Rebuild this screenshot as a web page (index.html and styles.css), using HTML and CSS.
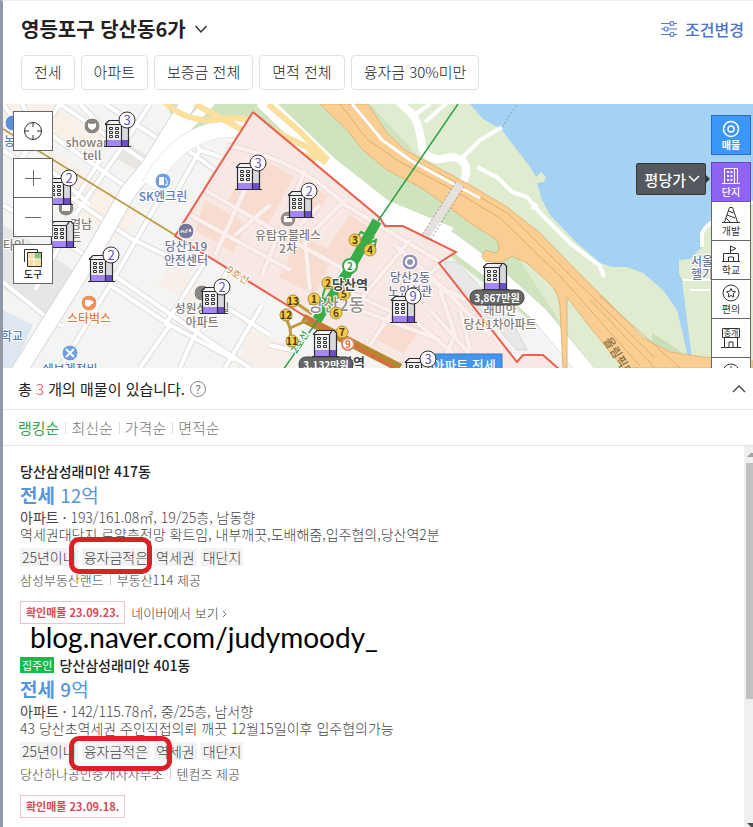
FILE: index.html
```html
<!DOCTYPE html>
<html lang="ko">
<head>
  <meta charset="UTF-8">
  <meta name="viewport" content="width=device-width, initial-scale=1.0">
  <link rel="stylesheet" href="styles.css">
  <title>영등포구 당산동6가 매물</title>
</head>
<body>

  <header class="header">
    <div class="header-top">
      <h1><button class="region">영등포구 당산동6가
        <svg width="14" height="10" viewBox="0 0 14 10"><path d="M1.500 2l5.500 6 5.500-6" fill="none" stroke="#333" stroke-width="1.500"/></svg>
      </button></h1>
      <button class="change">
        <svg width="16" height="16" viewBox="0 0 16 16" fill="none" stroke="#5379cf" stroke-width="1.200">
          <path d="M0 2.500h9M13 2.500h3M0 8h3M7 8h9M0 13.500h9M13 13.500h3"/>
          <circle cx="11" cy="2.500" r="2"/><circle cx="5" cy="8" r="2"/><circle cx="11" cy="13.500" r="2"/>
        </svg>
        조건변경
      </button>
    </div>
    <div class="filters">
      <button>전세</button>
      <button>아파트</button>
      <button>보증금 전체</button>
      <button>면적 전체</button>
      <button>융자금 30%미만</button>
    </div>
  </header>

  <section class="map">
    <svg class="map-canvas" viewBox="3 104 750 264" preserveAspectRatio="xMidYMid slice">
      <defs>
        <path id="streets" d="M3 150L60 190L130 238L180 262M3 205L70 245L150 300L215 345L250 368M3 282L50 320L62 326M22 104L48 150M60 104L20 160M60 104L150 165M105 104L160 140M30 120L130 190M150 104L120 150L75 215M45 165L90 205M165 190L110 285L60 368M110 285L170 325L235 360M170 325L140 368M205 262L165 325M228 270L190 345L180 368M215 300L270 335M262 305L225 368M270 345L300 352M3 104L22 130M60 245L35 290M80 104L100 125M160 130L215 170M180 122L200 150L175 195M200 150L245 165M75 200L100 160"/>
        <path id="lanes" d="M226 145Q300 160 345 205L440 262M205 190L300 245L345 270M190 215L290 270M240 135L205 190M262 152L215 255M305 170L262 275M345 200L305 240L310 290M375 222L340 275M410 240L360 300L330 310M440 265L400 300L370 345M395 245L440 285L490 335M345 290L420 325L470 368M360 310L440 340M440 290L455 335L440 368M440 290Q470 290 500 345M300 225L320 205M420 270Q450 300 480 300M460 310L470 350M235 235L270 205M430 310L480 365"/>
        <path id="expressway" d="M320 104L347 130L363 150L387 170L420 187L450 208L470 223L497 240Q502 252 494 253L486 250Q478 256 486 261L500 263L512 256L527 263L548 282Q559 292 560 307L563 368H567L567 297L590 327L623 368H753V361L703 357L670 352L643 338L613 307L573 267L540 233L507 207L470 185L433 165L405 150L387 133L370 107L367 104Z"/>
        <g id="tower">
          <path d="M2 28V7L6 2H22L25 6V28Z" fill="#f1f1f1"/>
          <path d="M17 5l5-3 3 4v16h-8z" fill="#d9d9dc"/>
          <path d="M2 22H17V28H2Z" fill="#a487f2"/>
          <path d="M17 22h8v6h-8z" fill="#6f50c8"/>
          <path d="M2.500 28V6.500M17.500 28V7M24.500 28V5M1 6.500H17.500M1 6.500L5 2.500H22L25 5.500M17.500 6.500L20 3M0 28.500H27" fill="none" stroke="#2d2b33" stroke-width="1.200"/>
          <path d="M5.500 9.500h3v2h-3zM11.500 9.500h3v2h-3zM5.500 13.500h3v2h-3zM11.500 13.500h3v2h-3zM5.500 17.500h3v2h-3zM11.500 17.500h3v2h-3z" fill="#fff" stroke="#333"/>
        </g>
      </defs>

      <!-- 바탕 -->
      <rect x="3" y="104" width="750" height="264" fill="#f4f4f3"/>
      <path d="M3 104h50l-30 40 -20-12zM60 110l45 28 -12 22 -50-30zM50 150l90 60 -20 30 -80-50z" fill="#f9f0e8"/>
      <path d="M3 225L45 250L75 272L45 318L3 288Z" fill="#e6e6e8"/>
      <path d="M3 310l30 15 -20 43h-10z" fill="#dde6f1"/>
      <path d="M170 262l50 30 -12 22 -50-30zM250 330l50 20 -10 18h-55z" fill="#f7efe9"/>
      <path d="M130 145l20 12 -8 16 -25-14z" fill="#e9e6e1"/>

      <!-- 녹지와 한강 -->
      <path d="M165 104H500V200L640 368H590L430 240L330 170L235 125L190 140L158 160L178 125Z" fill="#cfe3bf"/>
      <path d="M370 104H753V368H590L500 230L440 180Z" fill="#dfecd0"/>
      <path d="M470 104L483 119L502 130L517 150L530 167L536 177L541 172L546 177L544 182L537 183L542 200L550 215L577 243L600 263L612 267L627 267L643 273L663 290L677 310L682 330L688 358H692L687 320L682 280L679 273V260L690 259L702 247V232L712 223L753 205V104Z" fill="#a5d2f2"/>
      <path d="M702 247V234Q704 226 716 220L753 202" fill="none" stroke="#fff" stroke-width="4"/>
      <path d="M690 290h20M683 280h30" stroke="#fff" stroke-width="2"/>
      <path d="M652 333q20 12 30 20q-16 2-30-12z" fill="#c9dfb8"/>

      <!-- 도로 -->
      <use href="#streets" class="street-edge"/>
      <use href="#streets" class="street"/>
      <path d="M190 100L150 165L128 192L95 250L16 376" class="road-edge"/>
      <path d="M190 100L150 165L128 192L95 250L16 376" class="road"/>
      <path d="M212 100L165 150L140 178" class="road narrow"/>
      <path d="M150 185Q185 122 245 130L330 170L385 215L450 240L490 270L540 315L590 376" class="shore-edge"/>
      <path d="M150 185Q185 122 245 130L330 170L385 215L450 240L490 270L540 315L590 376" class="shore"/>
      <path d="M262 100L330 165L385 208L450 235" class="shore"/>
      <path d="M165 102Q185 122 215 120Q240 114 262 125L305 146L326 163M268 104L298 130L328 160M195 104L250 134L316 160" class="ramp"/>
      <path d="M397 100L413 115Q420 125 422 148Q430 164 450 157Q468 158 466 174L461 188" class="path wide"/>
      <path d="M430 104L410 118M450 100L425 122" class="path"/>
      <path d="M502 127L480 140L463 157M477 167L498 178L512 192L527 197L540 213L570 243L600 266L604 277M537 204L532 209" class="path"/>
      <path d="M502 127L517 104" fill="none" stroke="#8f9aa5" stroke-dasharray="2 2"/>
      <use href="#expressway" class="expressway"/>
      <path d="M340 104L368 140L400 162L450 188L500 218L560 276L640 366M350 104L378 137L405 156L455 182L510 215L570 275L655 358" class="expressway-lines"/>
      <path d="M352 104L382 140L410 160L450 182L480 198" fill="none" stroke="#fff" stroke-width="3"/>
      <path d="M600 296L680 368M590 300L655 368" class="expressway-lines"/>
      <path d="M460 184L426 236L418 252" class="bridge"/>
      <path d="M456 182L415 246M464 187L424 250" fill="none" stroke="#9b9b9b" stroke-dasharray="2 2"/>
      <path d="M445 262l12 0 54 58 16 30h-10l-72-80z" fill="#e9e8e7" stroke="#d5d5d5"/>

      <!-- 당산동6가 경계 -->
      <path d="M253 112L175 236L303 315L397 370H560L543 355H523L517 362L439 263L456 252L403 226H385L380 218Z" fill="#f8e8e3"/>
      <path d="M256 155l38 22 -26 48 -42-22zM205 200l42 24 -14 28 -38-22zM300 235l35 18 -20 42 -36-18zM350 215l25 16 -26 40 -28-14zM395 310l28 16 -20 28 -28-16zM300 178l28 18 -12 20 -26-16z" fill="#f8dcd0"/>
      <use href="#lanes" class="lane-edge"/>
      <use href="#lanes" class="lane"/>
      <path d="M253 112L175 236L303 315L397 370M560 370L543 355H523L517 362L439 263L456 252L403 226H385L380 218L253 112" fill="none" stroke="#e9604d" stroke-width="2"/>

      <!-- 지하철 -->
      <path d="M3 129L175 235" fill="none" stroke="#b89a45" stroke-width="1.500"/>
      <path d="M303 318L400 368" fill="none" stroke="#b8862c" stroke-width="9"/>
      <path d="M303 315L397 370" fill="none" stroke="#e9604d" stroke-width="2"/>
      <path d="M292 300L312 314M285 315L290 328L308 320M291 340L290 328" fill="none" stroke="#c09a46" stroke-width="3"/>
      <path d="M458 104L378 221M318 320L283 370" fill="none" stroke="#32a04a" stroke-width="1.500"/>
      <path d="M377 221L349 270L317 320" fill="none" stroke="#3aac47" stroke-width="10"/>
      <path d="M355 240L361 232L374 238M362 246L376 240L374 250M326 285L322 298L332 302L345 292" fill="none" stroke="#3aac47" stroke-width="2"/>
      <text x="236" y="278" class="line9" transform="rotate(32 236 278)">9호선</text>
      <text x="303" y="344" class="line2" transform="rotate(-58 303 344)">2호선</text>
      <text x="336" y="311" class="dong">당산2동</text>
      <g class="exit">
        <circle cx="355" cy="240" r="6"/><text x="355" y="244">3</text>
        <circle cx="370" cy="250" r="6"/><text x="370" y="254">4</text>
        <circle cx="328" cy="283" r="6"/><text x="328" y="287">2</text>
        <circle cx="344" cy="294" r="6"/><text x="344" y="298">5</text>
        <circle cx="314" cy="299" r="6"/><text x="314" y="303">1</text>
        <circle cx="336" cy="313" r="6"/><text x="336" y="317">6</text>
        <circle cx="293" cy="301" r="6"/><text x="293" y="305">13</text>
        <circle cx="286" cy="315" r="6"/><text x="286" y="319">12</text>
        <circle cx="292" cy="341" r="6"/><text x="292" y="345">11</text>
        <circle cx="342" cy="332" r="6"/><text x="342" y="336">7</text>
      </g>
      <circle cx="350" cy="266" r="7" fill="#fff" stroke="#3aac47" stroke-width="2"/>
      <text x="350" y="270" class="station-no green">2</text>
      <circle cx="348" cy="344" r="6" fill="#fff" stroke="#e08a66" stroke-width="2"/>
      <text x="348" y="348" class="station-no orange">9</text>

      <!-- 지명 -->
      <g class="spot">
        <circle cx="92" cy="126" r="8" fill="#8a8580"/><path d="M88 123q4 2 8 0v4q-4 6-8 0z" fill="#fff"/>
        <circle cx="163" cy="181" r="8" fill="#6f9fe0"/><path d="M159 177h5v8h-5z" fill="#fff"/><path d="M165 178l2 2v5h-2" fill="none" stroke="#fff"/>
        <circle cx="186" cy="231" r="8" fill="#78789a"/><path d="M181 233v-2h3v2M186 233v-3h2M189 232l1-3 1 3" fill="none" stroke="#fff"/>
        <circle cx="66" cy="208" r="8" fill="#8a8580"/><path d="M62 205h8v6h-8z" fill="#fff"/>
        <circle cx="89" cy="303" r="8" fill="#ee935c"/><path d="M85 300h6v5q-3 3-6 0zM91 301h2v3h-2" fill="#fff"/>
        <circle cx="70" cy="353" r="8" fill="#6f9fe0"/><path d="M66 349l8 8M74 349l-8 8" stroke="#fff" stroke-width="2"/>
        <circle cx="288" cy="219" r="8" fill="#9d8e88"/><path d="M284 216h8v6h-8z" fill="#fff"/>
        <circle cx="410" cy="262" r="8" fill="#9092b8"/><circle cx="410" cy="262" r="4" fill="none" stroke="#fff" stroke-width="2"/>
        <circle cx="202" cy="293" r="8" fill="#8a8580"/>
        <circle cx="13" cy="123" r="8" fill="#5b8fd8"/>
      </g>
      <g class="place">
        <text x="92" y="147">showand</text><text x="92" y="160">tell</text>
        <text x="163" y="201" class="blue">SK엔크린</text>
        <text x="186" y="251" class="slate">당산119</text><text x="186" y="265" class="slate">안전센터</text>
        <text x="81" y="229">경남</text><text x="76" y="242">트</text>
        <text x="14" y="250">타임</text>
        <text x="15" y="146" class="blue">농협</text>
        <text x="89" y="323" class="orange">스타벅스</text>
        <text x="12" y="341" class="blue">학교</text>
        <text x="70" y="374" class="blue">쉐보레정비</text>
        <text x="202" y="313">성원상떼빌</text><text x="202" y="327">아파트</text>
        <text x="288" y="240">유탑유블레스</text><text x="288" y="253">2차</text>
        <text x="410" y="282" class="slate">당산2동</text><text x="410" y="296" class="slate">노인회관</text>
        <text x="500" y="315">래미안</text><text x="500" y="329">당산1차아파트</text>
        <text x="702" y="266" class="slate">서울</text><text x="702" y="279" class="slate">헬기</text>
        <text x="350" y="289" class="station">당산역</text>
        <text x="347" y="367" class="station">당산역</text>
        <text x="618" y="364" class="road-name" transform="rotate(58 618 364)">올림픽대로</text>
      </g>

      <!-- 단지 마커 -->
      <g class="marker">
        <use href="#tower" x="104" y="118"/><circle cx="127" cy="120" r="8"/><text x="127" y="125">3</text>
        <use href="#tower" x="46" y="176"/><circle cx="69" cy="178" r="8"/><text x="69" y="183">2</text>
        <use href="#tower" x="49" y="219"/>
        <use href="#tower" x="88" y="253"/><circle cx="111" cy="255" r="8"/><text x="111" y="260">2</text>
        <use href="#tower" x="200" y="285"/><circle cx="222" cy="287" r="8"/><text x="222" y="292">2</text>
        <use href="#tower" x="235" y="161"/><circle cx="258" cy="163" r="8"/><text x="258" y="168">3</text>
        <use href="#tower" x="287" y="189"/><circle cx="309" cy="191" r="8"/><text x="309" y="196">2</text>
        <use href="#tower" x="390" y="294"/><circle cx="413" cy="296" r="8"/><text x="413" y="301">9</text>
        <use href="#tower" x="312" y="328"/>
        <use href="#tower" x="482" y="261"/>
        <rect x="432" y="354" width="70" height="20" fill="#4296ef" stroke="#3576c2"/>
        <text x="464" y="370" class="deal">아파트 전세</text>
        <use href="#tower" x="404" y="356"/><circle cx="428" cy="359" r="8"/><text x="428" y="364">3</text>
      </g>
      <g class="price-tag">
        <rect x="470" y="290" width="54" height="15" rx="7"/><text x="497" y="302">3,867만원</text>
        <rect x="299" y="357" width="54" height="15" rx="7"/><text x="326" y="369">3,132만원</text>
      </g>
    </svg>

    <div class="tools">
      <button class="tool" aria-label="현재 위치">
        <svg width="20" height="20" viewBox="0 0 20 20" fill="none" stroke="#333"><circle cx="10" cy="10" r="8.500"/><path d="M10 1v5M10 14v5M1 10h5M14 10h5"/></svg>
      </button>
      <div class="zoom">
        <button class="tool" aria-label="확대"><svg width="18" height="18" viewBox="0 0 18 18" stroke="#666"><path d="M9.500 1v16M1 9.500h16"/></svg></button>
        <button class="tool" aria-label="축소"><svg width="18" height="18" viewBox="0 0 18 18" stroke="#666"><path d="M1 9.500h16"/></svg></button>
      </div>
      <button class="tool">
        <svg width="20" height="20" viewBox="0 0 20 20"><path d="M1.500 14V1.500h13V4" fill="none" stroke="#333"/><path d="M4 4h15v15H4z" fill="#f5dfa9"/><path d="M11 4h8v7h-8z" fill="#8fc27c"/><path d="M4 11h15M11 4v15" stroke="#fff"/><path d="M4.500 4.500h14v14h-14z" fill="none" stroke="#333"/></svg>
        도구
      </button>
    </div>

    <button class="unit">평당가
      <svg width="12" height="8" viewBox="0 0 12 8"><path d="M1 1l5 5 5-5" fill="none" stroke="#fff" stroke-width="1.500"/></svg>
    </button>

    <div class="layers">
      <button class="layer sale">
        <svg width="18" height="18" viewBox="0 0 18 18" fill="none" stroke="#fff" stroke-width="1.500"><circle cx="9" cy="9" r="7.500"/><circle cx="9" cy="9" r="3"/></svg>
        매물
      </button>
      <button class="layer complex">
        <svg width="18" height="18" viewBox="0 0 18 18" fill="none" stroke="#fff"><path d="M0 16.500h18M2.500 16V1.500h10V16M12.500 1.500h3V16"/><path d="M5 4h2v2H5zM8.500 4h2v2h-2zM5 8h2v2H5zM8.500 8h2v2h-2zM5 12h2v2H5zM8.500 12h2v2h-2z" stroke="none" fill="#fff"/></svg>
        단지
      </button>
      <button class="layer">
        <svg width="18" height="18" viewBox="0 0 18 18" fill="none" stroke="#333"><path d="M0 16.500h18M2.500 16L7.500 1.500h3L15.500 16M6.500 5l5 2M5 9l8 3M8 16L4 12"/></svg>
        개발
      </button>
      <button class="layer">
        <svg width="18" height="18" viewBox="0 0 18 18" fill="none" stroke="#333"><path d="M0 16.500h18M1.500 16V8.500h15V16M6.500 16v-4h5v4M8.500 8V1L14 3.500 8.500 6"/></svg>
        학교
      </button>
      <button class="layer">
        <svg width="18" height="18" viewBox="0 0 18 18" fill="none" stroke="#333"><circle cx="9" cy="9" r="8"/><path d="M9 4.500l1.400 2.800 3 .4-2.200 2.200.5 3.100L9 11.500 6.300 13l.5-3.100L4.600 7.700l3-.4z"/></svg>
        편의
      </button>
      <button class="layer agent" aria-label="중개">
        <svg width="20" height="22" viewBox="0 0 20 22" fill="none" stroke="#333"><path d="M1.500 1.500h17v9h-17zM3.500 10.500v10M16.500 10.500v10M0 20.500h20M8 20v-5h4v5"/><text x="10" y="9" class="agent-text">중개</text></svg>
      </button>
      <button class="layer more" aria-label="더보기">
        <svg width="18" height="18" viewBox="0 0 18 18" fill="none" stroke="#333"><circle cx="9" cy="9" r="8"/><path d="M9 3v6l4 2"/></svg>
      </button>
    </div>
  </section>

  <section class="summary">
    <p>총 <em>3</em> 개의 매물이 있습니다.</p>
    <button class="help" aria-label="도움말">?</button>
    <button class="fold" aria-label="접기">
      <svg width="14" height="8" viewBox="0 0 14 8"><path d="M1 7l6-6 6 6" fill="none" stroke="#444" stroke-width="1.300"/></svg>
    </button>
  </section>

  <nav class="sort">
    <a href="#" class="active">랭킹순</a>
    <a href="#">최신순</a>
    <a href="#">가격순</a>
    <a href="#">면적순</a>
  </nav>

  <main class="results">
    <div class="list">
      <article class="item">
        <h2>당산삼성래미안 417동</h2>
        <p class="price">전세 <span>12억</span></p>
        <p class="spec"><b>아파트 ·</b> 193/161.08㎡, 19/25층, 남동향</p>
        <p class="desc">역세권대단지 로얄층전망 확트임, 내부깨끗,도배해줌,입주협의,당산역2분</p>
        <div class="tags marked">
          <span>25년이내</span><span>융자금적은</span><span>역세권</span><span>대단지</span>
        </div>
        <p class="agency"><span>삼성부동산랜드</span><span>부동산114 제공</span></p>
        <div class="confirm">
          <span class="date">확인매물 23.09.23.</span>
          <a href="#">네이버에서 보기 <svg width="5" height="8" viewBox="0 0 5 8"><path d="M1 1l3 3-3 3" fill="none" stroke="#777"/></svg></a>
        </div>
      </article>

      <article class="item">
        <h2><span class="owner">집주인</span>당산삼성래미안 401동</h2>
        <p class="price">전세 <span class="strong">9</span><span>억</span></p>
        <p class="spec"><b>아파트 ·</b> 142/115.78㎡, 중/25층, 남서향</p>
        <p class="desc">43 당산초역세권 주인직접의뢰 깨끗 12월15일이후 입주협의가능</p>
        <div class="tags marked long">
          <span>25년이내</span><span>융자금적은</span><span>역세권</span><span>대단지</span>
        </div>
        <p class="agency"><span>당산하나공인중개사사무소</span><span>텐컴즈 제공</span></p>
        <div class="confirm">
          <span class="date">확인매물 23.09.18.</span>
        </div>
      </article>

      <p class="signature">blog.naver.com/judymoody_</p>
    </div>

    <div class="scrollbar">
      <svg width="6" height="4" viewBox="0 0 6 4"><path d="M0 4L6 -2V4z" fill="#a3a3a3"/></svg>
      <div class="thumb"></div>
      <svg width="6" height="4" viewBox="0 0 6 4"><path d="M0 0L6 6V0z" fill="#505050"/></svg>
    </div>
  </main>

</body>
</html>
```
FILE: styles.css
```css
*, *::before, *::after {
  box-sizing: border-box;
}

body {
  margin: 0;
  height: 100vh;
  display: flex;
  flex-direction: column;
  overflow: hidden;
  background-color: #fff;
  border-top: 1px solid #eee;
  border-left: 3px solid #8f99a8;
  font-family: 'Noto Sans CJK KR', sans-serif;
  color: #222;
}

h1, h2, p {
  margin: 0;
}

button {
  margin: 0;
  padding: 0;
  border: none;
  background: none;
  color: inherit;
  font: inherit;
  cursor: pointer;
}

a {
  color: inherit;
  text-decoration: none;
}

/* 상단 */
.header {
  flex: none;
  padding: 14px 9px 14px 18px;
}

.header-top {
  display: flex;
  align-items: center;
  justify-content: space-between;
  height: 28px;
  margin-bottom: 12px;
}

h1 {
  font-size: 20px;
  line-height: 28px;
}

.region {
  display: flex;
  align-items: center;
  gap: 8px;
}

.change {
  display: flex;
  align-items: center;
  gap: 8px;
  font-size: 16px;
  font-weight: 500;
  color: #4a73c9;
}

.filters {
  display: flex;
  gap: 6px;
}

.filters button {
  height: 35px;
  padding: 0 12px 2px;
  border: 1px solid #e2e2e2;
  border-radius: 4px;
  font-size: 15px;
  font-weight: 300;
  color: #222;
}

/* 지도 */
.map {
  position: relative;
  flex: none;
  height: 264px;
  overflow: hidden;
}

.map-canvas {
  display: block;
  width: 100%;
  height: 100%;
}

.street-edge, .street, .lane-edge, .lane, .road-edge, .road,
.shore-edge, .shore, .ramp, .path, .bridge, .expressway-lines {
  fill: none;
}

.street-edge { stroke: #dcdcdc; stroke-width: 6; }
.street { stroke: #fff; stroke-width: 4; }
.lane-edge { stroke: #efdad4; stroke-width: 6; }
.lane { stroke: #fbf0ee; stroke-width: 4; }
.road-edge { stroke: #d9d9d9; stroke-width: 17; }
.road { stroke: #fff; stroke-width: 15; }
.road.narrow { stroke-width: 10; }
.shore-edge { stroke: #d9d9d9; stroke-width: 17; }
.shore { stroke: #fff; stroke-width: 16; }
.ramp { stroke: #fbdf9c; stroke-width: 6; }
.path { stroke: #fff; stroke-width: 4; }
.path.wide { stroke-width: 8; }
.bridge { stroke: #e4e1de; stroke-width: 8; }
.expressway { fill: #f9ce92; stroke: #e3b574; }
.expressway-lines { stroke: #e2ad68; }

.map text {
  text-anchor: middle;
}

.place text, .line2, .line9, .dong {
  font-size: 12px;
  font-weight: 500;
  fill: #857c76;
  stroke: #fff;
  stroke-width: 2px;
  paint-order: stroke;
}

.place .blue { fill: #5580bd; }
.place .slate { fill: #6f7696; }
.place .orange { fill: #e37f43; }
.place .station { font-size: 13px; font-weight: 700; fill: #444; }
.place .road-name { fill: #8c6f3f; stroke: none; }
.map .dong { font-size: 17px; fill: #95908c; }
.map .line2 { font-size: 10px; fill: #32a04a; }
.map .line9 { font-size: 10px; fill: #d6a05c; }
.spot circle { stroke: #fff; }

.exit circle {
  fill: #f6cd45;
  stroke: #a88e3f;
}

.exit text, .station-no {
  font-size: 10px;
  font-weight: 700;
  fill: #4b3d12;
}

.station-no.green { fill: #2f9a3c; }
.station-no.orange { fill: #d9714c; }

.marker circle {
  fill: #fff;
  stroke: #333;
}

.marker text {
  font-size: 13px;
  fill: #6c4fc4;
}

.marker .deal {
  fill: #fff;
  font-weight: 500;
}

.price-tag rect {
  fill: #666;
  stroke: #444;
}

.price-tag text {
  font-size: 10px;
  font-weight: 700;
  fill: #fff;
}

.tools {
  position: absolute;
  top: 7px;
  left: 10px;
  display: flex;
  flex-direction: column;
  gap: 7px;
}

.tool {
  display: flex;
  flex-direction: column;
  align-items: center;
  justify-content: center;
  width: 40px;
  height: 40px;
  background-color: #fff;
  border: 1px solid #666;
  font-size: 10px;
  line-height: 12px;
  font-weight: 500;
}

.zoom .tool + .tool {
  margin-top: -1px;
}

.unit {
  position: absolute;
  top: 59px;
  right: 47px;
  display: flex;
  align-items: center;
  gap: 2px;
  height: 32px;
  padding: 0 5px 0 8px;
  background-color: #54595f;
  border: 1px solid #34383c;
  border-radius: 2px;
  font-size: 15px;
  font-weight: 500;
  color: #fff;
}

.unit::after {
  content: '';
  position: absolute;
  top: 11px;
  right: -5px;
  border: 4px solid transparent;
  border-left-color: #34383c;
  border-right: none;
}

.layers {
  position: absolute;
  top: 11px;
  right: 2px;
}

.layer {
  display: flex;
  flex-direction: column;
  align-items: center;
  justify-content: center;
  width: 40px;
  height: 40px;
  margin-top: -1px;
  background-color: #fff;
  border: 1px solid #666;
  font-size: 10px;
  line-height: 13px;
  color: #333;
}

.layer.sale {
  margin: 0 0 8px;
  background-color: #3d96fa;
  border-color: #2c6fb9;
  color: #fff;
  font-weight: 700;
}

.layer.complex {
  background-color: #8e63f5;
  border-color: #6945bd;
  color: #fff;
  font-weight: 500;
}

.layer.more {
  justify-content: flex-start;
  padding-top: 5px;
}

.agent-text {
  font-size: 8px;
  fill: #333;
  stroke: none;
}

/* 매물 수 */
.summary {
  flex: none;
  display: flex;
  align-items: center;
  height: 42px;
  padding: 0 7px 0 15px;
  border-bottom: 1px solid #e5e5e5;
  font-size: 15px;
}

.summary em {
  font-style: normal;
  font-weight: 300;
  color: #e0444c;
}

.help {
  width: 16px;
  height: 16px;
  margin-left: 5px;
  border: 1px solid #888;
  border-radius: 50%;
  font-size: 12px;
  line-height: 14px;
  color: #777;
}

.fold {
  display: flex;
  margin-left: auto;
}

/* 정렬 */
.sort {
  flex: none;
  display: flex;
  align-items: center;
  height: 36px;
  padding-left: 15px;
  border-bottom: 1px solid #e5e5e5;
  font-size: 15px;
  line-height: 16px;
  font-weight: 300;
  color: #777;
}

.sort a + a {
  display: flex;
  align-items: center;
}

.sort a + a::before {
  content: '';
  width: 1px;
  height: 12px;
  margin: 0 5px 0 6px;
  background-color: #ddd;
}

.sort .active {
  font-weight: 400;
  color: #33a34b;
}

/* 목록 */
.results {
  flex: 1;
  min-height: 0;
  display: flex;
}

.list {
  position: relative;
  flex: 1;
  overflow: hidden;
}

.item {
  padding: 15px 17px 16px;
  font-size: 14px;
  font-weight: 300;
  color: #444;
}

h2 {
  display: flex;
  align-items: center;
  gap: 5px;
  font-size: 14px;
  line-height: 20px;
  font-weight: 500;
  color: #222;
}

.owner {
  padding: 0 2px;
  background-color: #19b84b;
  font-size: 11px;
  line-height: 16px;
  font-weight: 400;
  color: #fff;
}

.price {
  font-size: 19px;
  line-height: 28px;
  font-weight: 700;
  color: #5596d8;
}

.price span {
  font-weight: 400;
}

.price .strong {
  font-weight: 500;
}

.spec {
  line-height: 17px;
}

.spec b {
  font-weight: 400;
}

.desc {
  line-height: 17px;
}

.tags {
  position: relative;
  display: flex;
  gap: 4px;
  margin-top: 5px;
}

.tags span {
  padding: 0 2px;
  background-color: #f3f3f3;
  line-height: 18px;
}

.marked::after {
  content: '';
  position: absolute;
  top: -11px;
  left: 49px;
  width: 83px;
  height: 37px;
  border: 5px solid #dc2028;
  border-radius: 10px;
}

.marked.long::after {
  top: -6px;
  width: 103px;
  height: 35px;
}

.agency {
  display: flex;
  align-items: center;
  margin-top: 5px;
  font-size: 13px;
  line-height: 17px;
}

.agency span + span {
  display: flex;
  align-items: center;
}

.agency span + span::before {
  content: '';
  width: 1px;
  height: 11px;
  margin: 0 6px;
  background-color: #ccc;
}

.confirm {
  display: flex;
  align-items: center;
  gap: 6px;
  margin-top: 13px;
}

.confirm a {
  font-size: 13px;
}

.date {
  padding: 0 5px;
  border: 1px solid #eec4ca;
  font-size: 11px;
  line-height: 21px;
  font-weight: 700;
  color: #d94a59;
}

.signature {
  position: absolute;
  top: 173px;
  left: 27px;
  font-family: Lato, sans-serif;
  font-size: 28px;
  line-height: 36px;
  color: #000;
}

.scrollbar {
  flex: none;
  display: flex;
  flex-direction: column;
  align-items: flex-end;
  width: 9px;
  padding-top: 7px;
  background-color: #f0f0f0;
}

.thumb {
  width: 7px;
  height: 236px;
  margin: 6px 0 auto;
  background-color: #c1c1c1;
}
```
